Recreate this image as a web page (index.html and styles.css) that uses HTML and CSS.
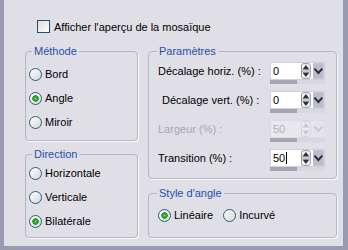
FILE: index.html
```html
<!DOCTYPE html>
<html lang="fr">
<head>
  <meta charset="UTF-8" />
  <title>Mosaïque</title>
  <link rel="stylesheet" href="styles.css">
</head>
<body>
  <div class="dialog">
    <div class="preview-row">
      <span class="checkbox"></span>
      <span>Afficher l'aperçu de la mosaïque</span>
    </div>

    <div class="columns">
      <div class="col-left">
        <div class="group group-method">
          <div class="group-title">Méthode</div>
          <div class="options">
            <div class="option"><span class="radio"></span>Bord</div>
            <div class="option"><span class="radio checked"></span>Angle</div>
            <div class="option"><span class="radio"></span>Miroir</div>
          </div>
        </div>

        <div class="group group-direction">
          <div class="group-title">Direction</div>
          <div class="options">
            <div class="option"><span class="radio"></span>Horizontale</div>
            <div class="option"><span class="radio"></span>Verticale</div>
            <div class="option"><span class="radio checked"></span>Bilatérale</div>
          </div>
        </div>
      </div>

      <div class="col-right">
        <div class="group group-params">
          <div class="group-title">Paramètres</div>
          <div class="params">
            <div class="param">
              <span class="param-label">Décalage horiz. (%) :</span>
              <div class="spin">
                <div class="spin-main">
                  <span class="spin-field">0</span>
                  <svg class="spin-arrows" width="10" height="16" viewBox="0 0 10 16"><rect x="0.5" y="0.5" width="9" height="15" rx="2" fill="#f2f2f5" stroke="#8e8e9c"/><line x1="1" y1="8" x2="9" y2="8" stroke="#a0a0ac"/><path d="M5 2 L8.5 6.5 H1.5 Z" fill="#2e2e3c"/><path d="M5 14 L8.5 9.5 H1.5 Z" fill="#2e2e3c"/></svg>
                  <svg class="spin-drop" width="11" height="16" viewBox="0 0 11 16"><rect width="11" height="16" fill="#bcbcce"/><path d="M1.5 5.5 L5.5 10 L9.5 5.5" stroke="#2a2a40" stroke-width="2" fill="none"/></svg>
                </div>
                <div class="spin-bar"></div>
              </div>
            </div>
            <div class="param">
              <span class="param-label indent">Décalage vert. (%) :</span>
              <div class="spin">
                <div class="spin-main">
                  <span class="spin-field">0</span>
                  <svg class="spin-arrows" width="10" height="16" viewBox="0 0 10 16"><rect x="0.5" y="0.5" width="9" height="15" rx="2" fill="#f2f2f5" stroke="#8e8e9c"/><line x1="1" y1="8" x2="9" y2="8" stroke="#a0a0ac"/><path d="M5 2 L8.5 6.5 H1.5 Z" fill="#2e2e3c"/><path d="M5 14 L8.5 9.5 H1.5 Z" fill="#2e2e3c"/></svg>
                  <svg class="spin-drop" width="11" height="16" viewBox="0 0 11 16"><rect width="11" height="16" fill="#bcbcce"/><path d="M1.5 5.5 L5.5 10 L9.5 5.5" stroke="#2a2a40" stroke-width="2" fill="none"/></svg>
                </div>
                <div class="spin-bar"></div>
              </div>
            </div>
            <div class="param disabled">
              <span class="param-label">Largeur (%) :</span>
              <div class="spin">
                <div class="spin-main">
                  <span class="spin-field">50</span>
                  <svg class="spin-arrows" width="10" height="16" viewBox="0 0 10 16"><rect x="0.5" y="0.5" width="9" height="15" rx="2" fill="#ececef" stroke="#d2d2d8"/><path d="M5 2 L8.5 6.5 H1.5 Z" fill="#c8c8cc"/><path d="M5 14 L8.5 9.5 H1.5 Z" fill="#c8c8cc"/></svg>
                  <svg class="spin-drop" width="11" height="16" viewBox="0 0 11 16"><rect width="11" height="16" fill="#e4e4ea"/><path d="M1.5 5.5 L5.5 10 L9.5 5.5" stroke="#c8c8d0" stroke-width="2" fill="none"/></svg>
                </div>
                <div class="spin-bar"></div>
              </div>
            </div>
            <div class="param">
              <span class="param-label">Transition (%) :</span>
              <div class="spin">
                <div class="spin-main">
                  <span class="spin-field">50<span class="caret"></span></span>
                  <svg class="spin-arrows" width="10" height="16" viewBox="0 0 10 16"><rect x="0.5" y="0.5" width="9" height="15" rx="2" fill="#f2f2f5" stroke="#8e8e9c"/><line x1="1" y1="8" x2="9" y2="8" stroke="#a0a0ac"/><path d="M5 2 L8.5 6.5 H1.5 Z" fill="#2e2e3c"/><path d="M5 14 L8.5 9.5 H1.5 Z" fill="#2e2e3c"/></svg>
                  <svg class="spin-drop" width="11" height="16" viewBox="0 0 11 16"><rect width="11" height="16" fill="#bcbcce"/><path d="M1.5 5.5 L5.5 10 L9.5 5.5" stroke="#2a2a40" stroke-width="2" fill="none"/></svg>
                </div>
                <div class="spin-bar"></div>
              </div>
            </div>
          </div>
        </div>

        <div class="group group-style">
          <div class="group-title">Style d'angle</div>
          <div class="options inline">
            <div class="option"><span class="radio checked"></span>Linéaire</div>
            <div class="option"><span class="radio"></span>Incurvé</div>
          </div>
        </div>
      </div>
    </div>
  </div>
</body>
</html>
```

FILE: styles.css
```css
body {
  margin: 0;
  font-family: "Liberation Sans", Arial, sans-serif;
  font-size: 11px;
  color: #000;
}

.dialog {
  width: 348px;
  height: 250px;
  box-sizing: border-box;
  background: #e0dfe5;
  border-left: 4px solid #9a9ab2;
  border-right: 5px solid #9a9ab2;
  border-bottom: 4px solid #9a9ab2;
}

.preview-row {
  display: flex;
  align-items: center;
  height: 13px;
  padding: 20px 0 0 33px;
}

.checkbox {
  width: 11px;
  height: 11px;
  border: 1px solid #1c5180;
  background: linear-gradient(135deg, #dcdcd7, #fff);
  margin-right: 4px;
}

.columns {
  display: flex;
  gap: 10px;
  margin-top: 18px;
  padding-left: 21px;
}

.col-left {
  width: 113px;
}

.col-right {
  width: 189px;
}

.group {
  border: 1px solid #b6b6c2;
  border-radius: 4px;
  box-shadow: 1px 1px 0 #fafafc;
}

.group-title {
  display: table;
  margin: -7px 0 0 6px;
  padding: 0 2px;
  line-height: 13px;
  background: #e0dfe5;
  color: #1f4fb0;
}

.col-right .group-title {
  margin-left: 8px;
}

.group-method {
  padding-bottom: 6px;
}

.group-method .options {
  margin-top: 4px;
}

.group-direction {
  margin-top: 13px;
  padding-bottom: 4px;
}

.option {
  display: flex;
  align-items: center;
  height: 24px;
  padding-left: 3px;
}

.radio {
  width: 11px;
  height: 11px;
  border: 1px solid #2a5a84;
  border-radius: 50%;
  background: linear-gradient(135deg, #fff, #d6d6d2);
  margin-right: 3px;
}

.radio.checked {
  background: radial-gradient(circle, #7ad27a 0, #21a121 2px, #2b9a2b 3px, transparent 3.5px), linear-gradient(135deg, #fff, #d6d6d2);
}

.options.inline {
  display: flex;
  margin-top: 3px;
  padding-left: 6px;
}

.options.inline .option + .option {
  margin-left: 7px;
}

.group-params {
  padding-bottom: 7px;
}

.params {
  margin-top: 4px;
}

.param {
  display: flex;
  height: 22px;
  padding: 0 11px 0 9px;
  margin-bottom: 7px;
}

.param:last-child {
  margin-bottom: 0;
}

.param-label {
  line-height: 18px;
}

.param-label.indent {
  padding-left: 4px;
}

.spin {
  margin-left: auto;
  width: 55px;
}

.spin-main {
  display: flex;
  align-items: center;
  height: 18px;
  box-sizing: border-box;
  border: 1px solid #d0d0d8;
  background: #fff;
}

.spin-field {
  width: 29px;
  padding-left: 2px;
  line-height: 16px;
  display: flex;
  align-items: center;
}

.spin-drop {
  margin-left: 2px;
}

.spin-bar {
  height: 4px;
  background: linear-gradient(to right, #a6a6b2 0, #a6a6b2 27px, #d8d8e0 27px);
}

.caret {
  display: inline-block;
  width: 1px;
  height: 12px;
  background: #000;
  margin-left: 1px;
}

.disabled .param-label {
  color: #a8a8ae;
}

.disabled .spin-main {
  background: #e8e8ec;
  border-color: #dcdce2;
}

.disabled .spin-field {
  color: #b0b0b4;
}

.group-style {
  margin-top: 14px;
  padding-bottom: 10px;
}
```
